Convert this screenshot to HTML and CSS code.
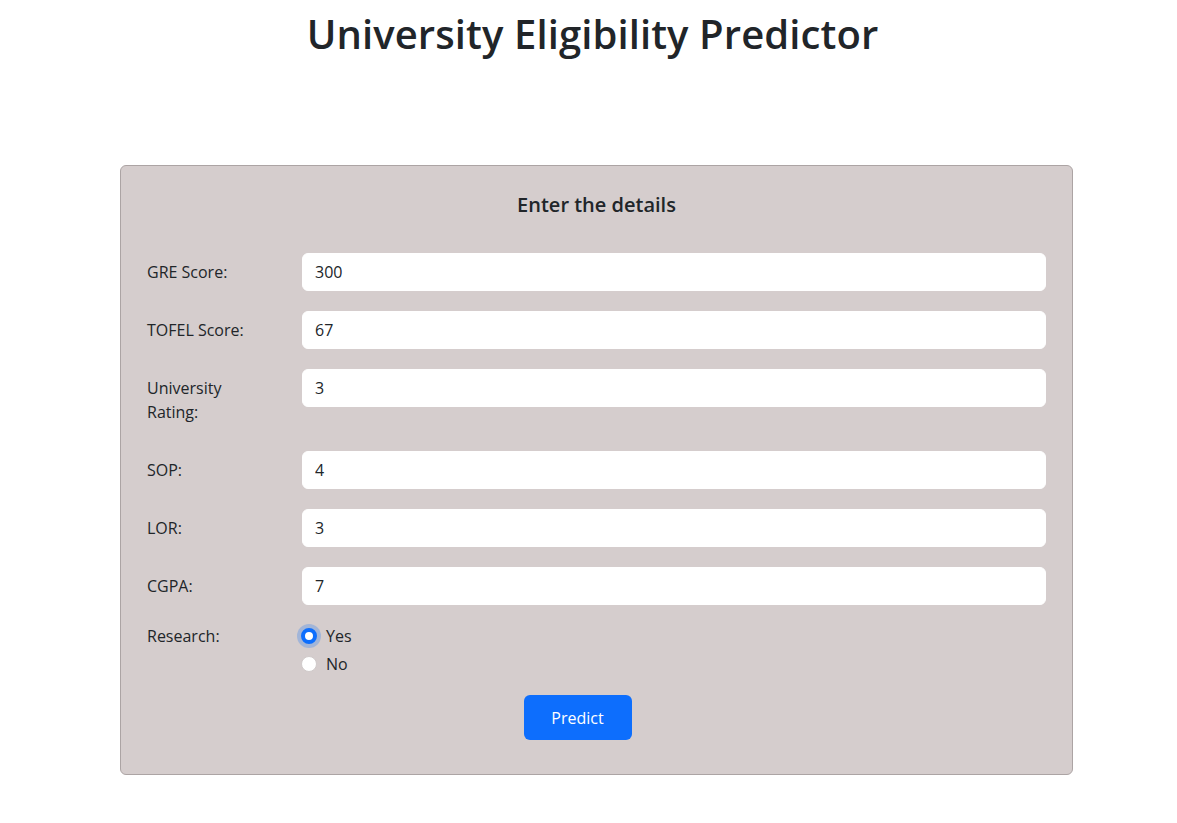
FILE: index.html
```html
<!DOCTYPE html>
<html lang="en">
<head>
<meta charset="utf-8">
<title>University Eligibility Predictor</title>
<link rel="stylesheet" href="styles.css">
</head>
<body>
<h1 class="title">University Eligibility Predictor</h1>
<form class="card">
  <h5 class="card-heading">Enter the details</h5>
  <div class="rows">
    <div class="row">
      <label class="label" for="gre">GRE Score:</label>
      <input class="input" id="gre" type="text" value="300">
    </div>
    <div class="row">
      <label class="label" for="tofel">TOFEL Score:</label>
      <input class="input" id="tofel" type="text" value="67">
    </div>
    <div class="row">
      <label class="label" for="rating">University Rating:</label>
      <input class="input" id="rating" type="text" value="3">
    </div>
    <div class="row">
      <label class="label" for="sop">SOP:</label>
      <input class="input" id="sop" type="text" value="4">
    </div>
    <div class="row">
      <label class="label" for="lor">LOR:</label>
      <input class="input" id="lor" type="text" value="3">
    </div>
    <div class="row">
      <label class="label" for="cgpa">CGPA:</label>
      <input class="input" id="cgpa" type="text" value="7">
    </div>
  </div>
  <div class="research">
    <span class="research-label">Research:</span>
    <div class="radios">
      <label class="radio-line"><span class="radio radio-checked"></span>Yes</label>
      <label class="radio-line"><span class="radio"></span>No</label>
    </div>
  </div>
  <div class="actions">
    <button class="btn" type="button">Predict</button>
  </div>
</form>
</body>
</html>
```
FILE: styles.css
```css
* { box-sizing: border-box; }
html, body {
  margin: 0;
  padding: 0;
  background: #ffffff;
  color: #212529;
  font-family: "Open Sans", "Noto Sans", sans-serif;
  font-size: 16px;
  line-height: 1.5;
}
.title {
  margin: 10px 0 0;
  padding-left: 8px;
  text-align: center;
  font-size: 40px;
  font-weight: 600;
  line-height: 48px;
  letter-spacing: 0.1px;
}
.card {
  width: 953px;
  margin: 107px 0 0 120px;
  background: #d5cdcd;
  border: 1px solid #aca4a4;
  border-radius: 6px;
  padding: 27px 26px 34px;
}
.card-heading {
  margin: 0 0 36px;
  text-align: center;
  font-size: 20px;
  font-weight: 600;
  line-height: 24px;
}
.rows {
  display: flex;
  flex-direction: column;
  gap: 20px;
}
.row {
  display: grid;
  grid-template-columns: 118px 1fr;
  column-gap: 37px;
  align-items: start;
}
.label {
  padding: 7px 0;
  line-height: 24px;
}
.input {
  height: 38px;
  border: 1px solid #ffffff;
  border-radius: 6px;
  background: #ffffff;
  padding: 6px 12px;
  font: inherit;
  color: #212529;
  outline: none;
  width: 100%;
}
.research {
  display: grid;
  grid-template-columns: 118px 1fr;
  column-gap: 37px;
  margin-top: 19px;
}
.research-label { line-height: 24px; }
.radios {
  display: flex;
  flex-direction: column;
  gap: 4px;
  margin-left: -1px;
}
.radio-line {
  display: flex;
  align-items: center;
  gap: 9px;
  line-height: 24px;
}
.radio {
  width: 16px;
  height: 16px;
  border-radius: 50%;
  background: #ffffff;
  border: 1px solid #d0caca;
  flex: none;
}
.radio-checked {
  background: #ffffff;
  border: 4px solid #0d6efd;
  box-shadow: 0 0 0 4px rgba(13, 110, 253, 0.25);
}
.actions {
  display: flex;
  justify-content: center;
  margin-top: 19px;
  padding-right: 38px;
}
.btn {
  width: 108px;
  height: 45px;
  border: none;
  border-radius: 6px;
  background: #0d6efd;
  color: #ffffff;
  font: inherit;
  font-size: 16px;
}
```
